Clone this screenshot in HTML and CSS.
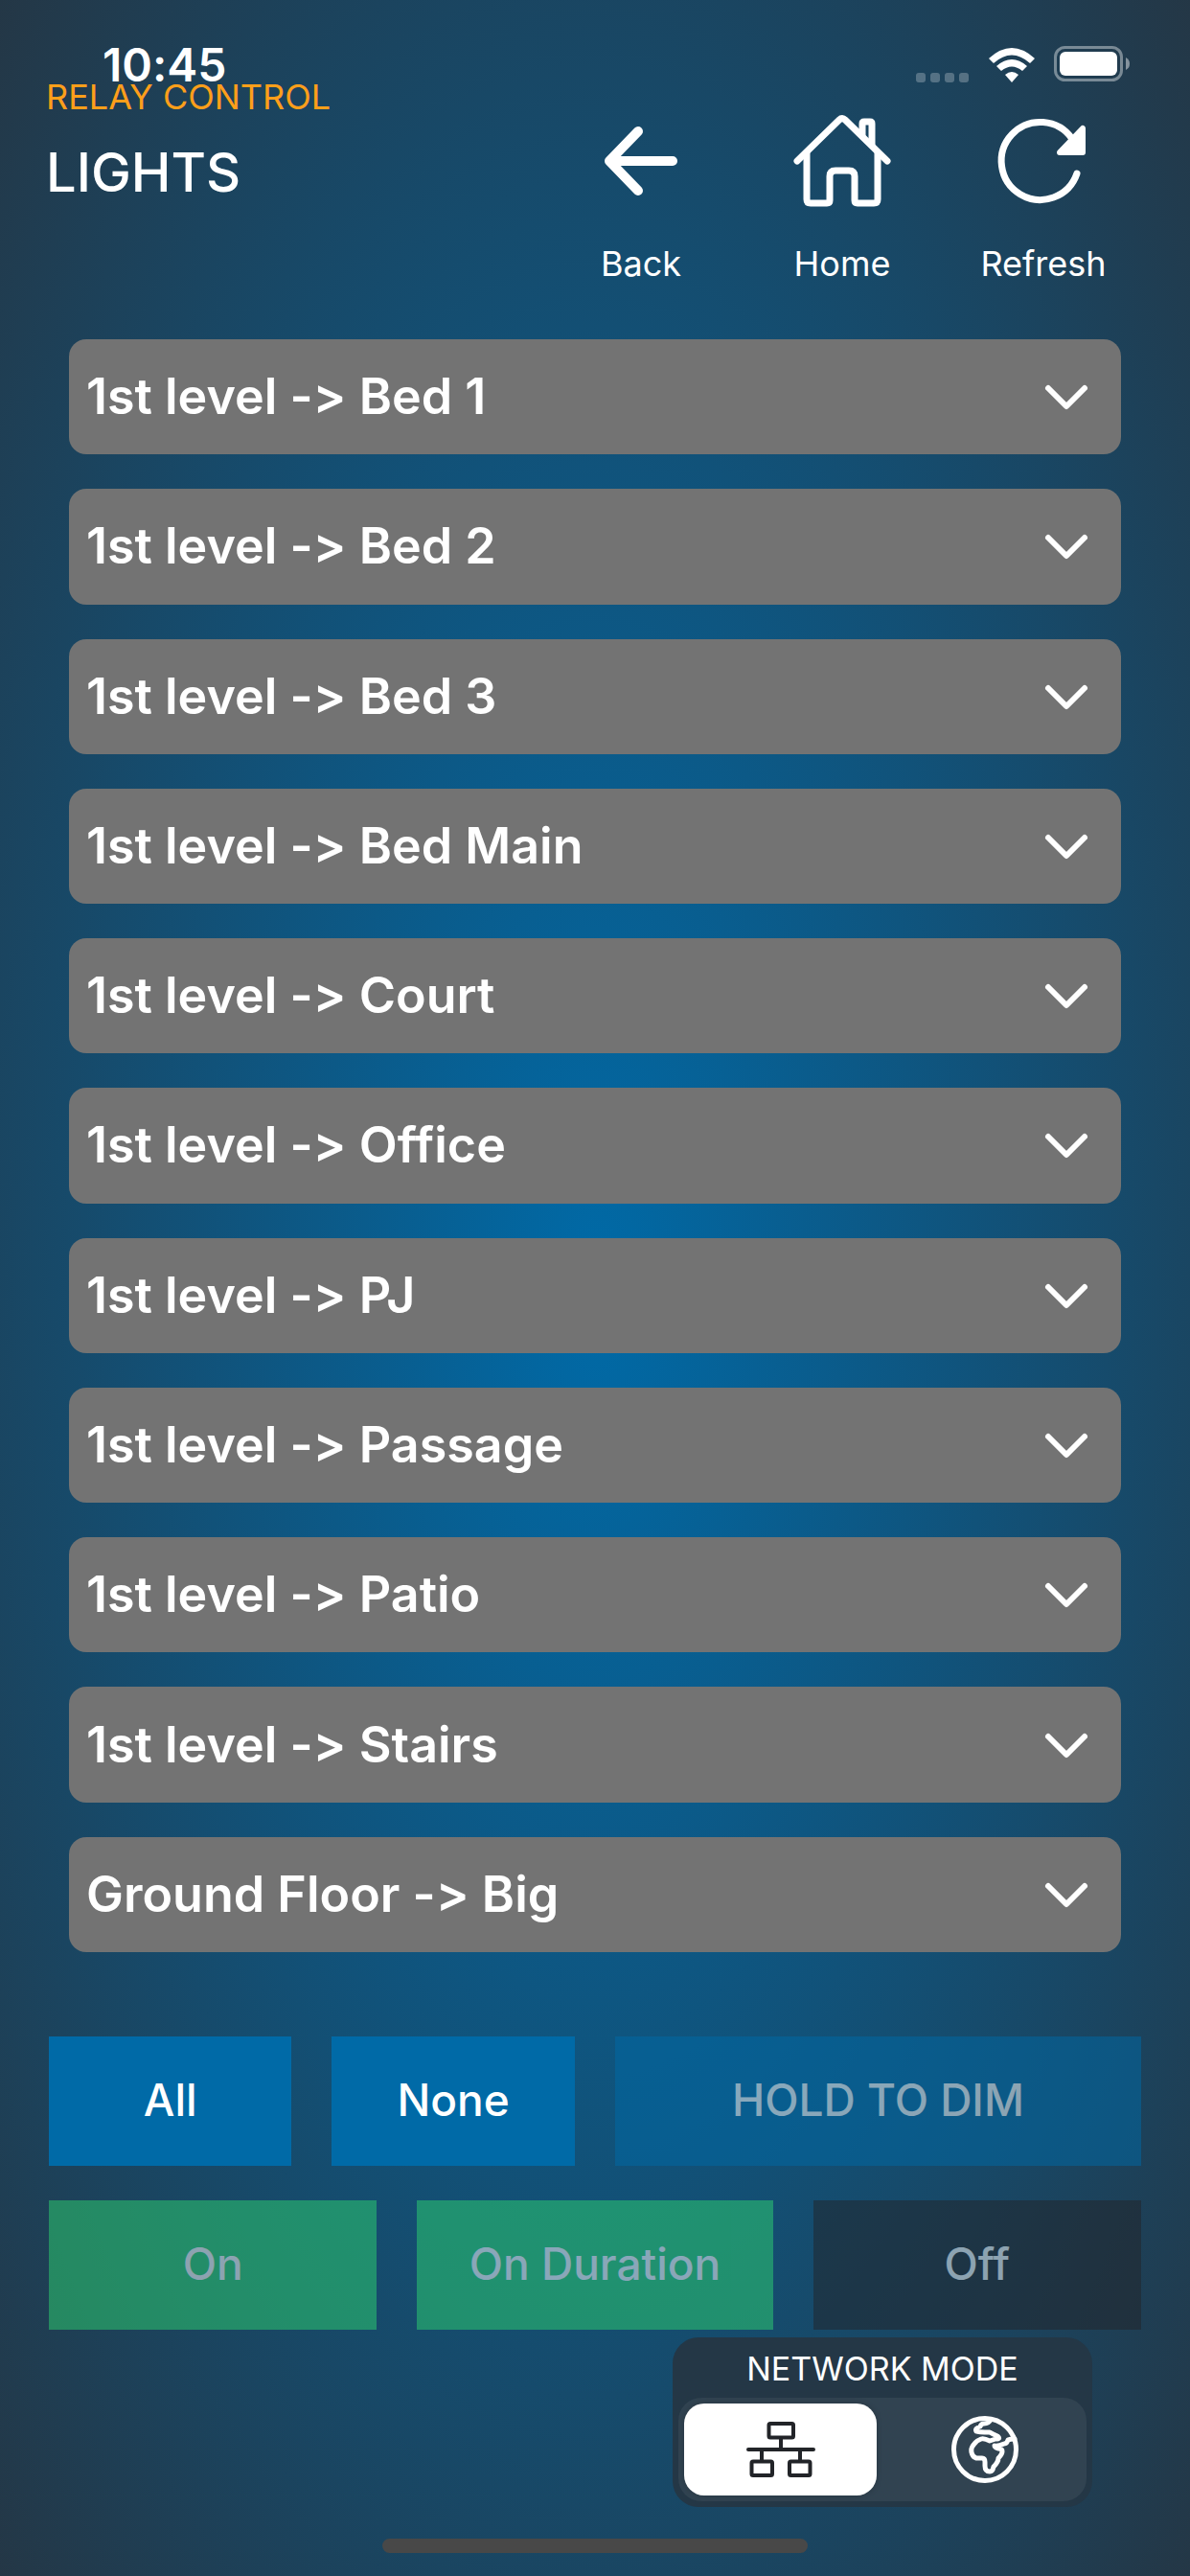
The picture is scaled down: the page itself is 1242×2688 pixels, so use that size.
FILE: index.html
```html
<!DOCTYPE html>
<html lang="en">
<head>
  <meta charset="utf-8">
  <meta name="viewport" content="width=device-width, initial-scale=1">
  <title>Lights</title>
  <link rel="stylesheet" href="styles.css">
</head>
<body>
  <div class="status-bar">
    <span class="time">10:45</span>
    <div class="status-icons">
      <svg class="signal" viewBox="0 0 56 10">
        <rect x="0" width="10" height="10" rx="3"/><rect x="15" width="10" height="10" rx="3"/>
        <rect x="30" width="10" height="10" rx="3"/><rect x="45" width="10" height="10" rx="3"/>
      </svg>
      <svg class="wifi" viewBox="0 0 48 36">
        <path d="M0 11Q24 -11 48 11L43 16Q24 -1 5 16Z"/>
        <path d="M8 19Q24 5 40 19L35 24Q24 15 13 24Z"/>
        <path d="M17 28Q24 22 31 28L24 36Z"/>
      </svg>
      <svg class="battery" viewBox="0 0 80 38">
        <rect class="case" x="1.5" y="1.5" width="69" height="34" rx="10"/>
        <path class="tip" d="M75 12Q79 14 79 18.500Q79 23 75 25Z"/>
        <rect x="6" y="6" width="60" height="25" rx="6"/>
      </svg>
    </div>
  </div>

  <header class="header">
    <div class="titles">
      <p class="section">RELAY CONTROL</p>
      <h1>LIGHTS</h1>
    </div>
    <nav class="nav">
      <button type="button">
        <svg viewBox="0 0 108 108"><path class="thick" d="M51 23L21 54L51 85M21 54H87"/></svg>
        <span>Back</span>
      </button>
      <button type="button">
        <svg viewBox="0 0 108 108">
          <path d="M7 54L51 11Q54 8 57 11L101 54"/>
          <path d="M17 46V94Q17 98 21 98H38Q41 98 41 95V70Q41 64 47 64H61Q67 64 67 70V95Q67 98 70 98H87Q91 98 91 94V46"/>
          <path d="M75 27V15Q75 13 77 13H83Q85 13 85 15V37"/>
        </svg>
        <span>Home</span>
      </button>
      <button type="button">
        <svg viewBox="0 0 108 108">
          <path d="M84 31A40.500 40.500 0 1 0 89 67"/>
          <path class="solid" d="M95 20V45H71Z"/>
        </svg>
        <span>Refresh</span>
      </button>
    </nav>
  </header>

  <main class="rooms" id="rooms"></main>

  <footer>
    <div class="actions actions-select">
      <button type="button" class="primary">All</button>
      <button type="button" class="primary">None</button>
      <button type="button" class="primary" disabled>HOLD TO DIM</button>
    </div>
    <div class="actions actions-switch">
      <button type="button" class="success" disabled>On</button>
      <button type="button" class="success" disabled>On Duration</button>
      <button type="button" class="dark" disabled>Off</button>
    </div>

    <fieldset class="network">
      <legend>NETWORK MODE</legend>
      <div class="segment">
        <label>
          <input type="radio" name="network" value="local" aria-label="Local network" checked>
          <svg class="lan" viewBox="0 0 72 72">
            <rect x="23.500" y="9" width="25.500" height="14.500" rx="1.500"/>
            <rect x="5.500" y="48.500" width="21.500" height="14.500" rx="1.500"/>
            <rect x="45" y="48.500" width="21.500" height="14.500" rx="1.500"/>
            <path d="M36 24V36M2 36H70M16 36V48M56 36V48"/>
          </svg>
        </label>
        <label>
          <input type="radio" name="network" value="internet" aria-label="Internet">
          <svg class="globe" viewBox="0 0 72 72">
            <circle cx="36" cy="36" r="32.500"/>
            <path d="M42 5Q40 9 35 9Q32 9 31 12Q25 14 27 17Q29 18 41 18Q44 20 49 22Q53 25 47 25L41 27Q35 24 32 25Q27 27 25 30Q21 34 22 39Q23 44 27 45H33Q36 45 36 49V53Q36 59 41 59Q44 59 45 54Q50 49 50 45Q54 41 54 38Q54 35 50 35Q46 34 46 32Q49 33 56 30Q59 30 60 26Q62 25 67 25"/>
          </svg>
        </label>
      </div>
    </fieldset>
    <div class="home-indicator"></div>
  </footer>

  <script>
  const rooms = [
    '1st level -> Bed 1',
    '1st level -> Bed 2',
    '1st level -> Bed 3',
    '1st level -> Bed Main',
    '1st level -> Court',
    '1st level -> Office',
    '1st level -> PJ',
    '1st level -> Passage',
    '1st level -> Patio',
    '1st level -> Stairs',
    'Ground Floor -> Big'
  ];
  const list = document.getElementById('rooms');

  rooms.forEach(name => {
    const room = document.createElement('button');
    room.type = 'button';
    room.className = 'room';
    room.setAttribute('aria-expanded', 'false');
    room.innerHTML = '<span></span><svg viewBox="0 0 48 48"><path d="M5 15L24 34L43 15"/></svg>';
    room.querySelector('span').textContent = name;
    room.onclick = () => {
      const open = room.getAttribute('aria-expanded') === 'true';
      room.setAttribute('aria-expanded', String(!open));
    };
    list.appendChild(room);
  });
  </script>
</body>
</html>
```
FILE: styles.css
```css
* {
  box-sizing: border-box;
}

body {
  margin: 0;
  min-height: 100vh;
  display: flex;
  flex-direction: column;
  font-family: Inter, "Liberation Sans", sans-serif;
  /* keeps "->" as two characters */
  font-variant-ligatures: no-contextual;
  color: #fff;
  background: radial-gradient(#006aa7, #243746);
}

button {
  font: inherit;
  font-variant-ligatures: inherit;
  color: inherit;
  border: 0;
  padding: 0;
  background: none;
  cursor: pointer;
}

h1, p {
  margin: 0;
}

svg {
  display: block;
}

/* status bar sits on top of the header */
.status-bar {
  position: absolute;
  top: 44px;
  left: 0;
  right: 0;
  display: flex;
  justify-content: space-between;
  padding: 0 62px 0 107px;
}

.time {
  font-size: 48px;
  line-height: 48px;
  font-weight: 600;
}

.status-icons {
  display: flex;
  align-items: flex-end;
  gap: 20px;
  height: 42px;
}

.status-icons svg {
  fill: #fff;
}

.signal {
  width: 56px;
  height: 10px;
  opacity: 0.25;
}

.wifi {
  width: 48px;
  height: 36px;
}

.battery {
  width: 80px;
  height: 38px;
}

.battery .case {
  fill: none;
  stroke: #fff;
  stroke-width: 3;
  opacity: 0.4;
}

.battery .tip {
  opacity: 0.45;
}

.header {
  display: flex;
  justify-content: space-between;
  padding: 80px 48px 58px;
}

.section {
  font-size: 36px;
  line-height: 42px;
  color: #ff9f1a;
}

h1 {
  margin-top: 22px;
  font-size: 56px;
  line-height: 72px;
  font-weight: 500;
}

.nav {
  display: flex;
  padding-top: 34px;
}

.nav button {
  width: 210px;
  display: flex;
  flex-direction: column;
  align-items: center;
  gap: 32px;
  font-size: 36px;
  line-height: 42px;
}

.nav svg {
  width: 108px;
  height: 108px;
  fill: none;
  stroke: #fff;
  stroke-width: 7;
  stroke-linecap: round;
  stroke-linejoin: round;
}

.nav .thick {
  stroke-width: 10;
}

.nav .solid {
  fill: #fff;
  stroke-width: 6;
}

.rooms {
  flex: 1;
  display: grid;
  grid-auto-rows: 1fr;
  gap: 36px;
  padding: 0 72px;
}

.room {
  display: flex;
  align-items: center;
  justify-content: space-between;
  min-height: 120px;
  padding: 0 33px 0 18px;
  border-radius: 18px;
  background: #737373;
  font-size: 52px;
  line-height: 60px;
  font-weight: 600;
  text-align: left;
}

.room svg {
  width: 48px;
  height: 48px;
  fill: none;
  stroke: #fff;
  stroke-width: 6;
  stroke-linecap: round;
  stroke-linejoin: round;
}

.room[aria-expanded="true"] svg {
  transform: rotate(180deg);
}

footer {
  padding: 88px 51px 24px;
}

.actions {
  display: grid;
  gap: 42px;
}

.actions-select {
  grid-template-columns: 6fr 6fr 13fr;
}

.actions-switch {
  grid-template-columns: 12fr 13fr 12fr;
  margin-top: 36px;
}

.actions button {
  height: 135px;
  padding-bottom: 4px;
  font-size: 46px;
  font-weight: 500;
}

.actions button:disabled {
  opacity: 0.5;
  cursor: default;
}

.primary {
  background: #006aa7;
}

.success {
  background: #2dd36f;
}

.dark {
  background: #222428;
}

.network {
  width: 438px;
  margin: 8px 51px 0 auto;
  padding: 6px;
  border: 0;
  border-radius: 27px;
  background: #243746;
}

.network legend {
  float: left;
  width: 100%;
  padding: 0 0 3px;
  font-size: 34px;
  line-height: 54px;
  text-align: center;
}

.segment {
  clear: both;
  display: grid;
  grid-template-columns: 1fr 1fr;
  gap: 12px;
  padding: 6px;
  border-radius: 24px;
  background: #314351;
}

.segment label {
  position: relative;
  display: flex;
  align-items: center;
  justify-content: center;
  height: 96px;
  border-radius: 21px;
  cursor: pointer;
}

.segment label:has(input:checked) {
  background: #fff;
  box-shadow: 0 0 6px rgba(0, 0, 0, 0.2);
}

.segment input {
  position: absolute;
  inset: 0;
  width: 100%;
  height: 100%;
  margin: 0;
  opacity: 0;
  cursor: pointer;
}

.segment svg {
  width: 72px;
  height: 72px;
  fill: none;
  stroke-linecap: round;
  stroke-linejoin: round;
}

.lan {
  stroke: #222428;
  stroke-width: 4;
}

.globe {
  stroke: #fff;
  stroke-width: 5;
}

.home-indicator {
  width: 444px;
  height: 15px;
  margin: 33px auto 0;
  border-radius: 8px;
  background: #484848;
}
```
